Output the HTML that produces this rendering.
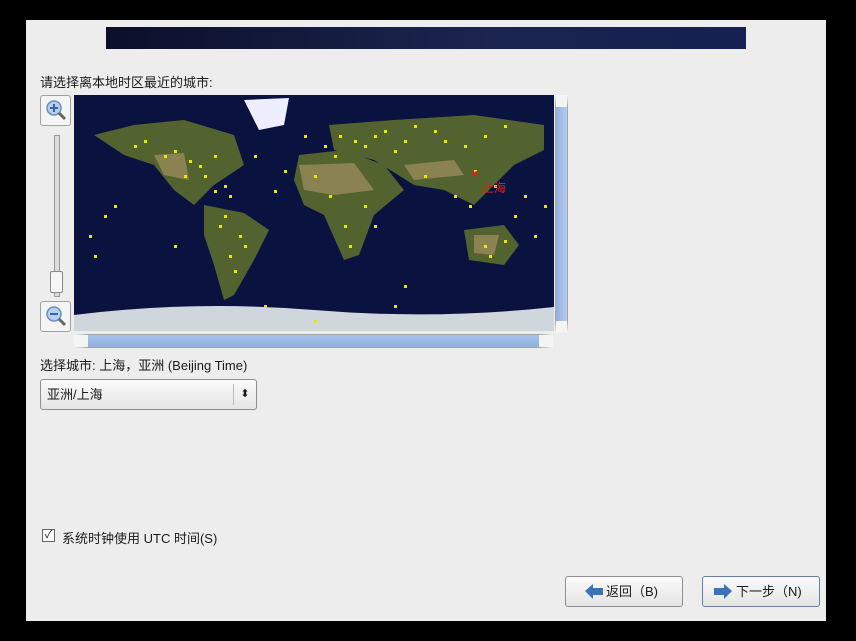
<!DOCTYPE html>
<html><head><meta charset="utf-8"><style>
body{margin:0;width:856px;height:641px;background:#000;position:relative;overflow:hidden;font-family:"Liberation Sans","Noto Sans CJK SC",sans-serif;font-size:13px;color:#1a1a1a}
#win{position:absolute;left:26px;top:20px;width:800px;height:601px;background:#ededed}
.ab{position:absolute}
.btn{position:absolute;height:31px;border:1px solid #8c8f94;border-radius:3px;background:linear-gradient(#fbfbfb,#e4e4e4);box-sizing:border-box;font-size:13px;line-height:29px}
</style></head><body>
<div id="win">
<div class="ab" style="left:80px;top:7px;width:640px;height:22px;background:linear-gradient(90deg,#0b0f2a,#1b2550 60%,#142050)"></div>
<div class="ab" style="left:14px;top:52px">请选择离本地时区最近的城市:</div>
<div class="ab" style="left:14px;top:75px;width:31px;height:31px;border:1px solid #a0a0a0;border-radius:3px;background:#f4f4f4;box-sizing:border-box">
<svg width="29" height="29"><circle cx="13" cy="12" r="7" fill="#b8d0ee" stroke="#6a8fc0" stroke-width="1.5"/><path d="M9 12h8M13 8v8" stroke="#3566a8" stroke-width="2"/><path d="M18 17l6 6" stroke="#666" stroke-width="3"/></svg></div>
<div class="ab" style="left:28px;top:115px;width:4px;height:160px;border:1px solid #999;background:#ddd"></div>
<div class="ab" style="left:24px;top:251px;width:11px;height:20px;border:1px solid #888;border-radius:2px;background:#f6f6f6"></div>
<div class="ab" style="left:14px;top:281px;width:31px;height:31px;border:1px solid #a0a0a0;border-radius:3px;background:#f4f4f4;box-sizing:border-box">
<svg width="29" height="29"><circle cx="13" cy="12" r="7" fill="#b8d0ee" stroke="#6a8fc0" stroke-width="1.5"/><path d="M9 12h8" stroke="#3566a8" stroke-width="2"/><path d="M18 17l6 6" stroke="#666" stroke-width="3"/></svg></div>
<svg class="ab" style="left:48px;top:75px" width="480" height="236">
<rect width="480" height="236" fill="#0a1240"/>
<g fill="#53632f">
<path d="M20 40 L60 30 L110 25 L160 40 L170 70 L140 90 L120 110 L100 95 L80 70 L50 60 Z"/>
<path d="M130 110 L170 118 L195 135 L180 165 L160 200 L150 205 L140 170 L130 140 Z"/>
<path d="M225 60 L270 55 L310 70 L330 95 L300 120 L285 160 L270 165 L250 120 L230 110 L220 85 Z"/>
<path d="M255 30 L320 25 L400 20 L470 30 L470 55 L440 70 L420 90 L400 110 L370 95 L340 90 L300 65 L260 55 Z"/>
<path d="M390 135 L430 130 L445 150 L430 170 L395 165 Z"/>
</g>
<g fill="#9a8a5a" opacity=".8"><path d="M225 70 L280 68 L300 95 L260 100 L230 95 Z"/><path d="M330 70 L380 65 L390 80 L340 85Z"/><path d="M400 140 L425 140 L420 160 L400 158Z"/><path d="M80 60 L110 58 L115 85 L90 80Z"/></g>
<path d="M170 5 L215 3 L210 30 L185 35 Z" fill="#eef"/>
<path d="M0 220 Q120 205 240 215 T480 212 L480 236 L0 236Z" fill="#cfd6dc"/>
<g fill="#e8e800">
<rect x="60" y="50" width="3" height="3"/><rect x="90" y="60" width="3" height="3"/><rect x="110" y="80" width="3" height="3"/><rect x="125" y="70" width="3" height="3"/><rect x="140" y="95" width="3" height="3"/><rect x="150" y="120" width="3" height="3"/><rect x="165" y="140" width="3" height="3"/><rect x="160" y="175" width="3" height="3"/><rect x="30" y="120" width="3" height="3"/><rect x="15" y="140" width="3" height="3"/><rect x="240" y="80" width="3" height="3"/><rect x="260" y="60" width="3" height="3"/><rect x="280" y="45" width="3" height="3"/><rect x="300" y="40" width="3" height="3"/><rect x="320" y="55" width="3" height="3"/><rect x="270" y="130" width="3" height="3"/><rect x="290" y="110" width="3" height="3"/><rect x="350" y="80" width="3" height="3"/><rect x="380" y="100" width="3" height="3"/><rect x="400" y="75" width="3" height="3"/><rect x="420" y="90" width="3" height="3"/><rect x="440" y="120" width="3" height="3"/><rect x="460" y="140" width="3" height="3"/><rect x="410" y="150" width="3" height="3"/><rect x="230" y="40" width="3" height="3"/><rect x="340" y="30" width="3" height="3"/><rect x="370" y="45" width="3" height="3"/><rect x="200" y="95" width="3" height="3"/><rect x="100" y="150" width="3" height="3"/><rect x="330" y="190" width="3" height="3"/><rect x="470" y="110" width="3" height="3"/><rect x="140" y="60" width="3" height="3"/>
<rect x="70" y="45" width="3" height="3"/><rect x="100" y="55" width="3" height="3"/><rect x="115" y="65" width="3" height="3"/><rect x="130" y="80" width="3" height="3"/><rect x="150" y="90" width="3" height="3"/><rect x="155" y="100" width="3" height="3"/><rect x="145" y="130" width="3" height="3"/><rect x="170" y="150" width="3" height="3"/><rect x="155" y="160" width="3" height="3"/><rect x="250" y="50" width="3" height="3"/><rect x="265" y="40" width="3" height="3"/><rect x="290" y="50" width="3" height="3"/><rect x="310" y="35" width="3" height="3"/><rect x="330" y="45" width="3" height="3"/><rect x="360" y="35" width="3" height="3"/><rect x="390" y="50" width="3" height="3"/><rect x="410" y="40" width="3" height="3"/><rect x="430" y="30" width="3" height="3"/><rect x="255" y="100" width="3" height="3"/><rect x="275" y="150" width="3" height="3"/><rect x="300" y="130" width="3" height="3"/><rect x="395" y="110" width="3" height="3"/><rect x="415" y="160" width="3" height="3"/><rect x="430" y="145" width="3" height="3"/><rect x="450" y="100" width="3" height="3"/><rect x="20" y="160" width="3" height="3"/><rect x="40" y="110" width="3" height="3"/><rect x="190" y="210" width="3" height="3"/><rect x="320" y="210" width="3" height="3"/><rect x="240" y="225" width="3" height="3"/><rect x="210" y="75" width="3" height="3"/><rect x="180" y="60" width="3" height="3"/></g>
<text x="397" y="82" fill="#e02020" font-size="9">✖</text>
<text x="408" y="97" fill="#e02020" font-size="12">上海</text>
</svg>
<div class="ab" style="left:529px;top:75px;width:13px;height:238px;border:1px solid #a5a5a5;background:linear-gradient(90deg,#8fb0e0,#b8cdf0);box-sizing:border-box;border-top:12px solid #f4f4f4;border-bottom:12px solid #f4f4f4"></div>
<div class="ab" style="left:48px;top:314px;width:479px;height:14px;border:1px solid #a5a5a5;background:linear-gradient(#a8c3ec,#8fb0e0);box-sizing:border-box;border-left:14px solid #f4f4f4;border-right:14px solid #f4f4f4"></div>
<div class="ab" style="left:14px;top:335px">选择城市: 上海，亚洲 (Beijing Time)</div>
<div class="btn" style="left:14px;top:359px;width:217px;padding-left:6px;line-height:29px">亚洲/上海<span class="ab" style="right:0;top:4px;width:22px;height:21px;border-left:1px solid #bbb;text-align:center;line-height:21px;font-size:11px">⬍</span></div>
<div class="ab" style="left:16px;top:509px;width:11px;height:11px;border:1px solid #666;background:#fff;font-size:11px;line-height:11px;text-align:center">✓</div>
<div class="ab" style="left:36px;top:508px">系统时钟使用 UTC 时间(S)</div>
<div class="btn" style="left:539px;top:556px;width:118px;padding-left:40px">返回（B)<svg class="ab" style="left:18px;top:6px" width="20" height="17"><path d="M1 8L9 1V5H19V12H9V16Z" fill="#3b73b8"/></svg></div>
<div class="btn" style="left:676px;top:556px;width:118px;padding-left:33px;border-color:#6a7fa0">下一步（N)<svg class="ab" style="left:10px;top:6px" width="20" height="17"><path d="M19 8L11 1V5H1V12H11V16Z" fill="#3b73b8"/></svg></div>
</div>
</body></html>
